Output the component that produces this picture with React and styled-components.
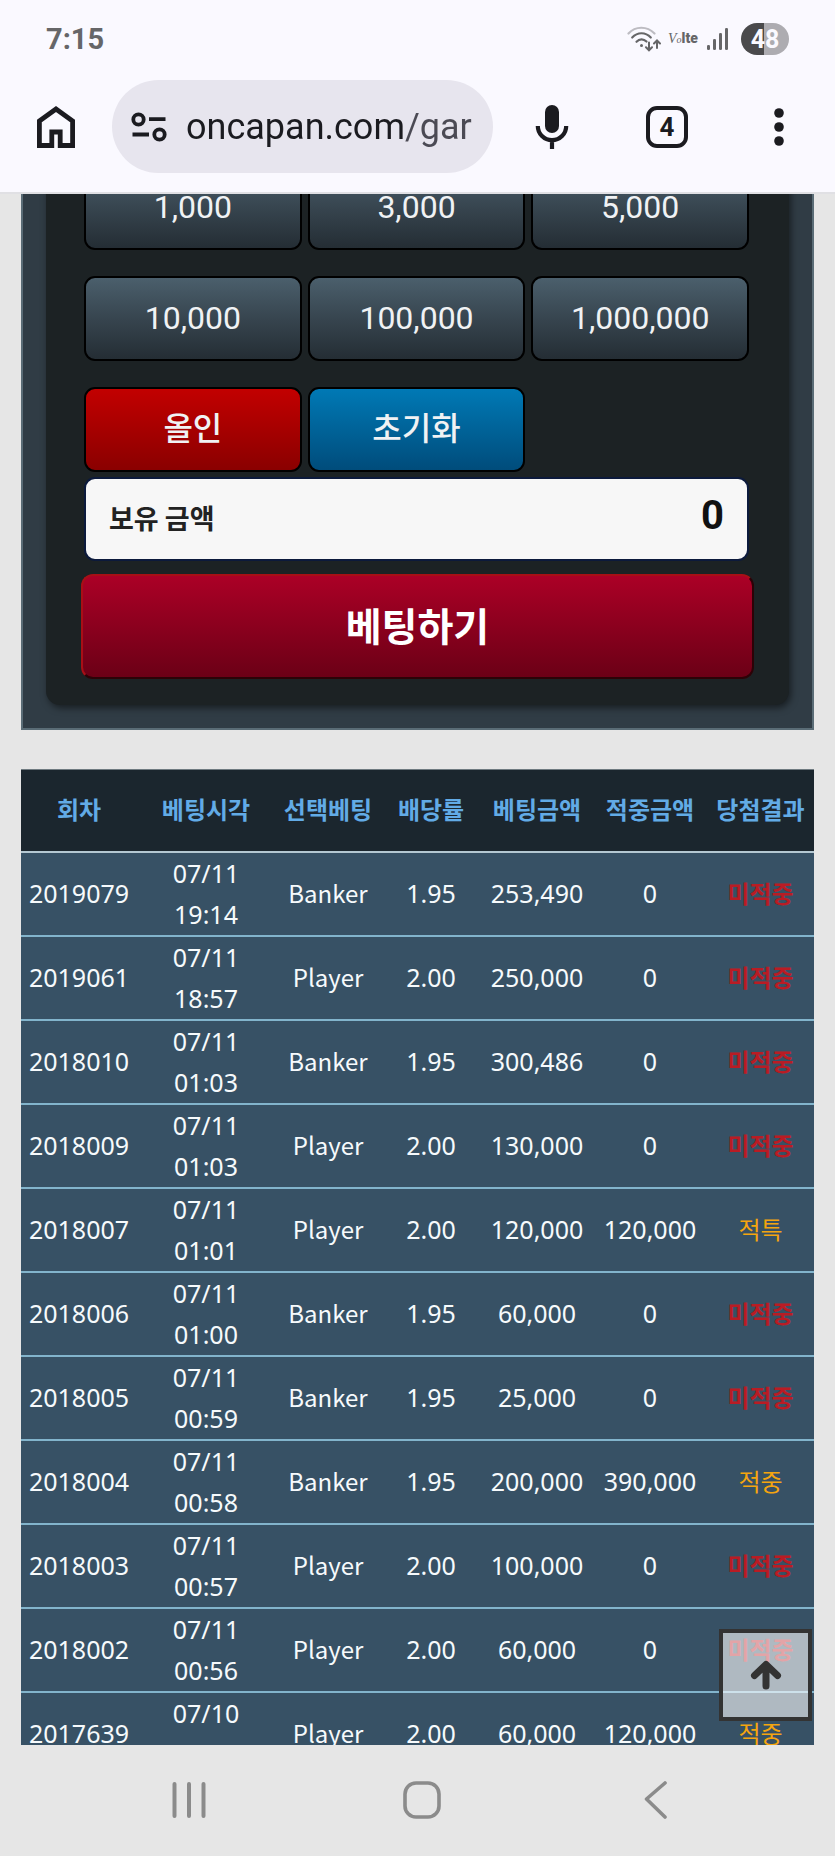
import React, { useState } from 'react';
import styled, { createGlobalStyle } from 'styled-components';

const colorInk = "#1b1b20";
const colorChrome = "#faf9ff";
const colorPage = "#e6e6e6";
const colorStatus = "#666668";
const colorLine = "#82b4cc";

const hangul = '"Noto Sans CJK KR", "Noto Sans", sans-serif';
const latin = 'Roboto, "Noto Sans CJK KR", sans-serif';

const GlobalStyle = createGlobalStyle`
  * {
    box-sizing: border-box;
  }

  body {
    margin: 0;
    background-color: ${colorPage};
    font-family: ${latin};
  }

  button {
    margin: 0;
    padding: 0;
    border: none;
    background: none;
    font: inherit;
    color: inherit;
    cursor: pointer;
  }
`;

const Screen = styled.div`
  height: 100vh;
  display: flex;
  flex-direction: column;
`;

const Header = styled.header`
  background-color: ${colorChrome};
  border-bottom: 2px solid #e0e0e4;
`;

const StatusBar = styled.div`
  display: flex;
  align-items: center;
  height: 80px;
  padding: 0 46px 2px;
  color: ${colorStatus};
`;

const Clock = styled.time`
  margin-right: auto;
  font-size: 29px;
  line-height: 32px;
  font-weight: 700;
`;

const StatusIcons = styled.div`
  display: flex;
  align-items: center;
  gap: 7px;

  & > svg {
    display: block;
  }
`;

const Volte = styled.span`
  width: 32px;
  font-size: 14px;
  line-height: 16px;
  font-weight: 900;
  white-space: nowrap;

  & > i {
    font-family: "Liberation Serif", serif;
    font-size: 14px;
    font-weight: 400;
  }

  & > i + i {
    font-size: 10px;
  }
`;

const Battery = styled.span`
  width: 48px;
  height: 32px;
  margin-left: 5px;
  border-radius: 16px;
  background: linear-gradient(to right, #4a4a4c 48%, #adacb1 48%);
  color: ${colorChrome};
  font-size: 25px;
  line-height: 33px;
  font-weight: 700;
  text-align: center;
`;

const Toolbar = styled.div`
  display: flex;
  align-items: center;
  padding-bottom: 19px;
`;

const ToolButton = styled.button`
  flex: none;
  display: flex;
  justify-content: center;
  align-items: center;
  width: ${props => props.$wide ? "118px" : "112px"};
  height: 93px;
`;

const AddressBar = styled.div`
  flex: 1;
  min-width: 0;
  display: flex;
  align-items: center;
  gap: 19px;
  height: 93px;
  padding: 0 19px;
  border-radius: 47px;
  background-color: #e7e5ee;
`;

const SiteButton = styled.button`
  flex: none;
  display: flex;
`;

/* the host is darker than the path that follows it */
const Address = styled.input`
  flex: 1;
  min-width: 0;
  height: 60px;
  padding: 0;
  border: none;
  outline: none;
  background: linear-gradient(to right, ${colorInk} 219px, #4b4a54 219px);
  background-clip: text;
  -webkit-background-clip: text;
  color: transparent;
  font-family: ${latin};
  font-size: 36px;
`;

const Main = styled.main`
  position: relative;
  flex: 1;
  min-height: 0;
  overflow: hidden;
  padding: 0 21px;
`;

/* the page is scrolled down past the top of the panel */
const Panel = styled.section`
  margin-top: -60px;
  margin-bottom: 39px;
  padding: 23px;
  border: 2px solid #5a6c76;
  background-color: #303c45;
`;

const Slip = styled.form`
  padding: 6px 35px 26px;
  border-radius: 14px;
  background-color: #1c2224;
  box-shadow: 2px 3px 7px rgba(0, 0, 0, 0.5);
`;

const Chips = styled.div`
  display: grid;
  grid-template-columns: repeat(3, 1fr);
  gap: 26px 6px;
  margin: 0 5px 5px 3px;
`;

const fills = {
  slate: "linear-gradient(#4b5f6c, #37454f 50%, #242d34)",
  red: "linear-gradient(#c20000, #8a0000)",
  blue: "linear-gradient(#0079b5, #004c7b)",
};

const Chip = styled.button`
  && {
    height: 85px;
    padding-bottom: 2px;
    border: 2px solid #000000;
    border-radius: 11px;
    background: ${props => fills[props.$fill]};
    color: #f0f2f4;
    font-size: 32px;
  }
`;

const ActionChip = styled(Chip)`
  && {
    padding-bottom: 7px;
    font-weight: 500;
  }
`;

const Balance = styled.div`
  display: flex;
  justify-content: space-between;
  align-items: center;
  height: 84px;
  margin: 0 5px 13px 3px;
  padding: 0 23px;
  border: 2px solid #0c1a3c;
  border-radius: 11px;
  background-color: #f7f7f7;
  color: #222222;

  & > label {
    padding-bottom: 4px;
    font-family: ${hangul};
    font-size: 27px;
    font-weight: 700;
  }

  & > output {
    padding-bottom: 8px;
    color: #111111;
    font-size: 40px;
    font-weight: 700;
  }
`;

const BetButton = styled.button`
  && {
    display: block;
    width: 100%;
    height: 105px;
    padding-bottom: 6px;
    border: 2px solid;
    border-color: #a80f16 #2c0207 #2c0207 #a80f16;
    border-radius: 12px;
    background: linear-gradient(#ab0026, #6b0016);
    color: #ffffff;
    font-family: ${hangul};
    font-size: 39px;
    font-weight: 700;
  }
`;

const Table = styled.table`
  width: 100%;
  table-layout: fixed;
  border-collapse: separate;
  border-spacing: 0;
  background-color: #375165;
  color: #f6fafc;
  font-family: "Noto Sans", "Noto Sans CJK KR", sans-serif;
  font-size: 25px;
  line-height: 41px;
  text-align: center;
  white-space: nowrap;
`;

const Head = styled.th`
  height: 82px;
  padding: 0 0 4px;
  border-top: 1px solid #6f7a80;
  background-color: #1b262e;
  color: #62abe6;
  font-family: ${hangul};
  font-size: 24px;
  font-weight: 700;
`;

const Cell = styled.td`
  padding: 0 0 2px;
  border-top: 2px solid ${colorLine};

  tr:first-child > & {
    border-top-color: #b4c8d2;
  }
`;

const TimeCell = styled(Cell)`
  padding: 0;
`;

const Pick = styled(Cell)`
  padding-bottom: 4px;
  font-family: ${hangul};
  font-size: 24px;
`;

const Result = styled(Pick)`
  color: ${props => props.$lost ? "#b91c24" : "#f5a50f"};
  font-weight: ${props => props.$lost ? 700 : 400};
`;

const TopButton = styled.button`
  && {
    position: absolute;
    right: 23px;
    bottom: 24px;
    display: flex;
    justify-content: center;
    align-items: center;
    width: 93px;
    height: 92px;
    border: 4px solid #333333;
    background-color: rgba(255, 255, 255, 0.6);
  }
`;

const NavBar = styled.nav`
  display: grid;
  grid-template-columns: repeat(3, 1fr);
  height: 111px;
  padding: 0 62px 2px 72px;
  background-color: ${colorPage};
`;

const NavButton = styled.button`
  display: flex;
  justify-content: center;
  align-items: center;
`;

const columns = [
  { label: "회차", width: 116 },
  { label: "베팅시각", width: 138 },
  { label: "선택베팅", width: 106 },
  { label: "배당률", width: 100 },
  { label: "베팅금액", width: 112 },
  { label: "적중금액", width: 114 },
  { label: "당첨결과", width: 107 },
];

const bets = [
  ["2019079", "07/11", "19:14", "Banker", "1.95", "253,490", "0", "미적중"],
  ["2019061", "07/11", "18:57", "Player", "2.00", "250,000", "0", "미적중"],
  ["2018010", "07/11", "01:03", "Banker", "1.95", "300,486", "0", "미적중"],
  ["2018009", "07/11", "01:03", "Player", "2.00", "130,000", "0", "미적중"],
  ["2018007", "07/11", "01:01", "Player", "2.00", "120,000", "120,000", "적특"],
  ["2018006", "07/11", "01:00", "Banker", "1.95", "60,000", "0", "미적중"],
  ["2018005", "07/11", "00:59", "Banker", "1.95", "25,000", "0", "미적중"],
  ["2018004", "07/11", "00:58", "Banker", "1.95", "200,000", "390,000", "적중"],
  ["2018003", "07/11", "00:57", "Player", "2.00", "100,000", "0", "미적중"],
  ["2018002", "07/11", "00:56", "Player", "2.00", "60,000", "0", "미적중"],
  ["2017639", "07/10", "", "Player", "2.00", "60,000", "120,000", "적중"],
];

const amounts = ["1,000", "3,000", "5,000", "10,000", "100,000", "1,000,000"];

function WifiIcon() {
  return (
    <svg width="34" height="28" viewBox="0 0 34 28" fill="none" stroke={colorStatus} strokeWidth="2.2" strokeLinecap="round">
      <path d="M1.5 8.5C8.5 .8 20 .8 27.5 8.5" stroke="#bdbcc2" />
      <path d="M5.2 12.5C10.5 6.8 18.5 6.8 23.8 12.5" />
      <path d="M9.5 16.8C12.5 13.5 16.5 13.5 19.5 16.5" />
      <circle cx="14.5" cy="20.5" r="1.5" fill={colorStatus} stroke="none" />
      <path d="M22 17.5V25M19 22.3L22 25.3L25 22.3M30 23V16M27 18.5L30 15.5L33 18.5" strokeWidth="2" />
    </svg>
  );
}

function SignalIcon() {
  return (
    <svg width="22" height="24" viewBox="0 0 22 24" fill={colorStatus}>
      <rect x="0" y="18" width="3" height="5" rx="1.3" />
      <rect x="6" y="12" width="3" height="11" rx="1.3" />
      <rect x="12" y="6" width="3" height="17" rx="1.3" />
      <rect x="18" y="1" width="3" height="22" rx="1.3" />
    </svg>
  );
}

function HomeIcon() {
  return (
    <svg width="38" height="42" viewBox="0 0 38 42" fill="none" stroke={colorInk} strokeWidth="4.8">
      <path d="M2.4 15L19 3L35.6 15V39.5H23.2V26H14.8V39.5H2.4Z" />
    </svg>
  );
}

function TuneIcon() {
  return (
    <svg width="36" height="30" viewBox="0 0 36 30" fill="none" stroke={colorInk} strokeWidth="3.8">
      <circle cx="7.5" cy="7.5" r="5.2" />
      <path d="M18 7.2H34.5M1.5 22.5H18" />
      <circle cx="28.5" cy="22.5" r="5.2" />
    </svg>
  );
}

function MicIcon() {
  return (
    <svg width="34" height="46" viewBox="0 0 34 46">
      <rect x="10" y="1" width="14" height="28" rx="7" fill={colorInk} />
      <path d="M2.8 22A14.2 14.2 0 0 0 31.2 22M17 36V45" fill="none" stroke={colorInk} strokeWidth="4.2" />
    </svg>
  );
}

const TabCount = styled.span`
  width: 42px;
  height: 42px;
  border: 4px solid ${colorInk};
  border-radius: 11px;
  color: ${colorInk};
  font-size: 26px;
  line-height: 35px;
  font-weight: 700;
`;

function BetHistory() {
  return (
    <Table>
      <colgroup>
        {columns.map(({ label, width }) => <col key={label} width={width} />)}
      </colgroup>
      <thead>
        <tr>
          {columns.map(({ label }) => <Head key={label} scope="col">{label}</Head>)}
        </tr>
      </thead>
      <tbody>
        {bets.map(([round, day, hour, pick, odds, stake, win, result]) => (
          <tr key={round}>
            <Cell>{round}</Cell>
            <TimeCell>{day}<br />{hour || "\u00a0"}</TimeCell>
            <Pick>{pick}</Pick>
            <Cell>{odds}</Cell>
            <Cell>{stake}</Cell>
            <Cell>{win}</Cell>
            <Result $lost={result === "미적중"}>{result}</Result>
          </tr>
        ))}
      </tbody>
    </Table>
  );
}

function App() {
  const [url, setUrl] = useState("oncapan.com/gar");

  const submit = (e) => {
    e.preventDefault();
  }

  return (
    <Screen>
      <GlobalStyle />
      <Header>
        <StatusBar>
          <Clock>7:15</Clock>
          <StatusIcons>
            <WifiIcon />
            <Volte><i>V</i><i>o</i>lte</Volte>
            <SignalIcon />
            <Battery>48</Battery>
          </StatusIcons>
        </StatusBar>
        <Toolbar>
          <ToolButton type="button" aria-label="Home"><HomeIcon /></ToolButton>
          <AddressBar>
            <SiteButton type="button" aria-label="Site settings"><TuneIcon /></SiteButton>
            <Address type="text" aria-label="Address" value={url} onChange={e => setUrl(e.target.value)} />
          </AddressBar>
          <ToolButton type="button" aria-label="Voice search" $wide><MicIcon /></ToolButton>
          <ToolButton type="button" aria-label="Tabs"><TabCount>4</TabCount></ToolButton>
          <ToolButton type="button" aria-label="Menu">
            <svg width="10" height="38" viewBox="0 0 10 38" fill={colorInk}>
              <circle cx="5" cy="5" r="4.8" />
              <circle cx="5" cy="19" r="4.8" />
              <circle cx="5" cy="33" r="4.8" />
            </svg>
          </ToolButton>
        </Toolbar>
      </Header>
      <Main>
        <Panel>
          <Slip onSubmit={submit}>
            <Chips>
              {amounts.map(amount => <Chip key={amount} type="button" $fill="slate">{amount}</Chip>)}
              <ActionChip type="button" $fill="red">올인</ActionChip>
              <ActionChip type="reset" $fill="blue">초기화</ActionChip>
            </Chips>
            <Balance>
              <label htmlFor="balance">보유 금액</label>
              <output id="balance">0</output>
            </Balance>
            <BetButton type="submit">베팅하기</BetButton>
          </Slip>
        </Panel>
        <BetHistory />
        <TopButton type="button" aria-label="Scroll to top">
          <svg width="32" height="30" viewBox="0 0 32 30" fill="none" stroke="#333333" strokeWidth="7" strokeLinecap="round" strokeLinejoin="round">
            <path d="M4.5 15.5L16 4.5L27.5 15.5M16 6V26" />
          </svg>
        </TopButton>
      </Main>
      <NavBar>
        <NavButton type="button" aria-label="Recent apps">
          <svg width="34" height="36" viewBox="0 0 34 36" stroke="#8b8b8b" strokeWidth="4" strokeLinecap="round">
            <path d="M2.5 2V34M17 2V34M31.5 2V34" />
          </svg>
        </NavButton>
        <NavButton type="button" aria-label="Home screen">
          <svg width="38" height="38" viewBox="0 0 38 38" fill="none" stroke="#8b8b8b" strokeWidth="3.6">
            <rect x="2" y="2" width="34" height="34" rx="11" />
          </svg>
        </NavButton>
        <NavButton type="button" aria-label="Back">
          <svg width="24" height="38" viewBox="0 0 24 38" fill="none" stroke="#8b8b8b" strokeWidth="3.6" strokeLinecap="round" strokeLinejoin="round">
            <path d="M21 2L2.5 18L21 36" />
          </svg>
        </NavButton>
      </NavBar>
    </Screen>
  );
}

export default App;
